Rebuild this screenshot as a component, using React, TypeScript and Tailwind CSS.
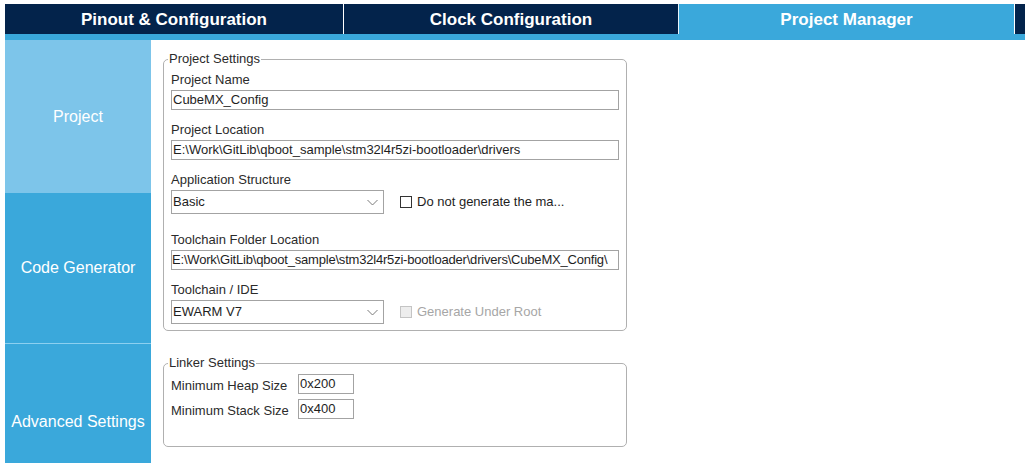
const font = "font-['Liberation_Sans',Arial,sans-serif]";

function Chevron() {
  return (
    <svg width="11" height="7" viewBox="0 0 11 7" className="mr-[5px]">
      <polyline points="0.5,1 5.5,6 10.5,1" fill="none" stroke="#7a7a7a" strokeWidth="1" />
    </svg>
  );
}

function Field({ value, scrolled }: { value: string; scrolled?: boolean }) {
  return (
    <div
      className={`h-[20px] w-[448px] border border-[#a3a3a3] bg-white flex items-center overflow-hidden whitespace-nowrap text-[13px] text-[#1e1e1e] ${
        scrolled ? "pl-0 tracking-[-0.2px]" : "pl-[1px]"
      }`}
    >
      {value}
    </div>
  );
}

function Select({ value }: { value: string }) {
  return (
    <div className="h-[24px] w-[213px] border border-[#a3a3a3] bg-white flex items-center justify-between pl-[1px] text-[13px] text-[#1e1e1e]">
      <span>{value}</span>
      <Chevron />
    </div>
  );
}

function Check({ label, disabled }: { label: string; disabled?: boolean }) {
  return (
    <div className="flex items-center ml-[16px]">
      <div
        className={`w-[12px] h-[12px] border ${
          disabled ? "border-[#c4c4c4] bg-[#ededed]" : "border-[#333333] bg-white"
        }`}
      />
      <span className={`ml-[5px] text-[13px] ${disabled ? "text-[#a6a6a6]" : "text-[#1e1e1e]"}`}>{label}</span>
    </div>
  );
}

function Label({ children, className = "" }: { children: React.ReactNode; className?: string }) {
  return <div className={`text-[13px] leading-[15px] text-[#2b2b2b] ${className}`}>{children}</div>;
}

export default function App() {
  return (
    <div className={`${font} w-[1025px] h-[463px] overflow-hidden bg-white pt-[4px] pl-[5px]`}>
      <div className="flex h-[30px] bg-[#03234b] text-white text-[17px] font-bold">
        <div className="w-[338px] flex items-center justify-center pt-[2px]">Pinout &amp; Configuration</div>
        <div className="w-[1px] bg-white" />
        <div className="w-[334px] flex items-center justify-center pt-[2px]">Clock Configuration</div>
        <div className="w-[1px] bg-[#e8f4fb]" />
        <div className="w-[335px] flex items-center justify-center pt-[2px] bg-[#3aa8db]">Project Manager</div>
        <div className="w-[1px] bg-white" />
        <div className="flex-1" />
      </div>
      <div className="h-[6px] bg-[#3aa8db]" />
      <div className="flex">
        <div className="w-[146px] flex flex-col text-white text-[16px] shrink-0">
          <div className="h-[153px] bg-[#7dc5ea] flex items-center justify-center">Project</div>
          <div className="h-[150px] bg-[#3aa8db] flex items-center justify-center">Code Generator</div>
          <div className="h-[1px] bg-[#8dd0f0]" />
          <div className="h-[156px] bg-[#3aa8db] flex items-center justify-center">Advanced Settings</div>
        </div>
        <div className="pl-[12px] pt-[12px]">
          <fieldset className="w-[464px] border border-[#b0b0b0] rounded-[5px] pl-[7px] pr-[7px] pb-[6px]">
            <legend className="-ml-[3px] px-[1px] text-[13px] leading-[14px] text-[#2b2b2b]">Project Settings</legend>
            <Label className="mt-[6px]">Project Name</Label>
            <div className="mt-[3px]">
              <Field value="CubeMX_Config" />
            </div>
            <Label className="mt-[12px]">Project Location</Label>
            <div className="mt-[3px]">
              <Field value="E:\Work\GitLib\qboot_sample\stm32l4r5zi-bootloader\drivers" />
            </div>
            <Label className="mt-[12px]">Application Structure</Label>
            <div className="mt-[3px] flex items-center">
              <Select value="Basic" />
              <Check label="Do not generate the ma..." />
            </div>
            <Label className="mt-[18px]">Toolchain Folder Location</Label>
            <div className="mt-[3px]">
              <Field scrolled value="E:\Work\GitLib\qboot_sample\stm32l4r5zi-bootloader\drivers\CubeMX_Config\" />
            </div>
            <Label className="mt-[12px]">Toolchain / IDE</Label>
            <div className="mt-[3px] flex items-center">
              <Select value="EWARM V7" />
              <Check disabled label="Generate Under Root" />
            </div>
          </fieldset>
          <fieldset className="mt-[25px] w-[464px] h-[91px] border border-[#b0b0b0] rounded-[5px] pl-[7px] pr-[7px]">
            <legend className="-ml-[3px] px-[1px] text-[13px] leading-[14px] text-[#2b2b2b]">Linker Settings</legend>
            <div className="mt-[4px] flex items-center h-[20px]">
              <Label className="w-[127px] pt-[2px]">Minimum Heap Size</Label>
              <div className="h-[20px] w-[56px] border border-[#a3a3a3] flex items-center pl-[1px] text-[13px] text-[#1e1e1e]">0x200</div>
            </div>
            <div className="mt-[5px] flex items-center h-[20px]">
              <Label className="w-[127px] pt-[2px]">Minimum Stack Size</Label>
              <div className="h-[20px] w-[56px] border border-[#a3a3a3] flex items-center pl-[1px] text-[13px] text-[#1e1e1e]">0x400</div>
            </div>
          </fieldset>
        </div>
      </div>
    </div>
  );
}
